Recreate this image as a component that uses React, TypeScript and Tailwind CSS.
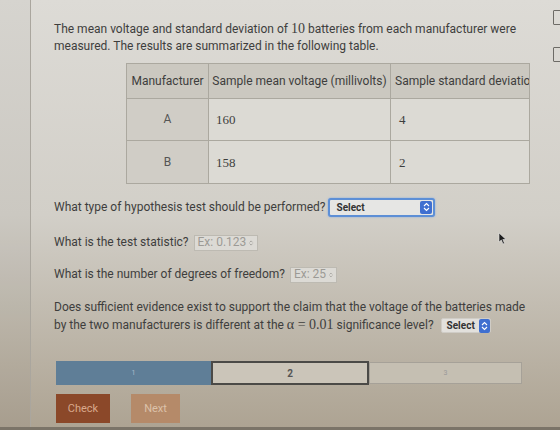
import React from 'react';

const rows = [
  { id: 'A', mean: '160', sd: '4' },
  { id: 'B', mean: '158', sd: '2' },
];

function Stepper({ className = '' }: { className?: string }) {
  return (
    <svg width="7" height="10" viewBox="0 0 7 10" className={className}>
      <path d="M1 4 L3.5 1.5 L6 4" fill="none" stroke="currentColor" strokeWidth="1.1" />
      <path d="M1 6 L3.5 8.5 L6 6" fill="none" stroke="currentColor" strokeWidth="1.1" />
    </svg>
  );
}

function NumberInput({ placeholder, width }: { placeholder: string; width: string }) {
  return (
    <span className={`inline-flex items-center justify-between gap-[3px] whitespace-nowrap h-[16px] ${width} px-[3px] ml-[5px] border border-[#bdbab2] bg-[#dcdad5] text-[#9c9a95]`}>
      <span>{placeholder}</span>
      <Stepper className="text-[#8f8d88]" />
    </span>
  );
}

export default function App() {
  return (
    <div
      className="relative w-[560px] h-[430px] overflow-hidden flex bg-linear-to-b from-[#dddbd6] via-[#d2cfc8] to-[#ada392] text-[#3e3e3d] text-[12px] leading-[17px]"
      style={{ fontFamily: 'Roboto, "Liberation Sans", sans-serif' }}
    >
      {/* left gutter */}
      <div className="w-[31px] shrink-0 border-r border-[#aaa69e] bg-black/[0.03]" />

      {/* question panel */}
      <div className="flex-1 pl-[23px] pt-[20px]">
        <p className="w-[480px]">
          The mean voltage and standard deviation of{' '}
          <span className="text-[14px]" style={{ fontFamily: '"Liberation Serif", serif' }}>10</span> batteries from each manufacturer were
          measured. The results are summarized in the following table.
        </p>

        <div className="ml-[72px] mt-[8px] w-[404px] overflow-hidden border border-[#aba89f]">
          <div className="flex h-[35px] bg-[#cbc8c0] border-b border-[#aba89f] whitespace-nowrap">
            <div className="w-[82px] shrink-0 flex items-center justify-center border-r border-[#aba89f]">Manufacturer</div>
            <div className="w-[182px] shrink-0 flex items-center justify-center border-r border-[#aba89f]">Sample mean voltage (millivolts)</div>
            <div className="flex-1 min-w-0 flex items-center pl-[4px] overflow-hidden">Sample standard deviation</div>
          </div>
          {rows.map((r, i) => (
            <div key={r.id} className={`flex h-[42px] ${i === 0 ? 'border-b border-[#aba89f]' : ''}`}>
              <div className="w-[82px] shrink-0 flex items-center justify-center bg-[#d0cdc6] border-r border-[#aba89f] text-[#555]">{r.id}</div>
              <div
                className="w-[182px] shrink-0 flex items-center pl-[7px] bg-[#dcdad4] border-r border-[#aba89f] text-[13px]"
                style={{ fontFamily: '"Liberation Serif", serif' }}
              >
                {r.mean}
              </div>
              <div
                className="flex-1 flex items-center pl-[8px] bg-[#dcdad4] text-[13px]"
                style={{ fontFamily: '"Liberation Serif", serif' }}
              >
                {r.sd}
              </div>
            </div>
          ))}
        </div>

        <div className="mt-[13px] flex items-center h-[20px]">
          <span>What type of hypothesis test should be performed?</span>
          <span className="ml-[3px] flex items-center justify-between w-[107px] h-[19px] rounded-[3px] border-2 border-[#5d8fd6] bg-[#e6e6e4] pl-[6px] pr-[1px] shadow-[0_0_2px_#7aa6e8]">
            <span className="text-[10px] font-bold text-[#333]">Select</span>
            <span className="w-[12px] h-[13px] rounded-[2px] bg-[#3f6fd0] flex items-center justify-center text-white">
              <Stepper />
            </span>
          </span>
        </div>

        <div className="mt-[17px] flex items-center h-[17px]">
          <span>What is the test statistic?</span>
          <NumberInput placeholder="Ex: 0.123" width="w-[64px]" />
        </div>

        <div className="mt-[15px] flex items-center h-[17px]">
          <span>What is the number of degrees of freedom?</span>
          <NumberInput placeholder="Ex: 25" width="w-[47px]" />
        </div>

        <p className="mt-[16px] w-[480px]">
          Does sufficient evidence exist to support the claim that the voltage of the batteries made
          <br />
          by the two manufacturers is different at the{' '}
          <span className="text-[14px]" style={{ fontFamily: '"Liberation Serif", serif' }}>
            α = 0.01
          </span>{' '}
          significance level?
          <span className="inline-flex items-center align-middle ml-[7px] h-[15px] w-[50px] rounded-[2px] bg-[#e2e0dc] border border-[#cfccc6] pl-[5px] justify-between">
            <span className="text-[10px] font-bold text-[#333]">Select</span>
            <span className="w-[11px] h-[14px] rounded-[2px] bg-[#3f6fd0] flex items-center justify-center text-white">
              <Stepper />
            </span>
          </span>
        </p>

        {/* part progress */}
        <div className="mt-[27px] flex w-[466px] h-[24px] items-stretch ml-[2px]">
          <div className="w-[155px] bg-[#5f7e97] flex items-center justify-center text-[7px] text-[#a9bccb]">1</div>
          <div className="w-[158px] border-2 border-[#4b4a47] bg-[#cbc5b9] flex items-center justify-center text-[10px] font-bold text-[#555]">2</div>
          <div className="flex-1 my-[1px] border border-[#a6a198] bg-[#c5bfb2] flex items-center justify-center text-[7px] text-[#999]">3</div>
        </div>

        <div className="mt-[9px] ml-[2px] flex gap-[21px]">
          <button className="w-[54px] h-[29px] bg-[#8b4829] text-[#d9a88c] text-[11px]">Check</button>
          <button className="w-[49px] h-[29px] bg-[#b58a69] text-[#dcc2a9] text-[11px]">Next</button>
        </div>
      </div>

      {/* right edge controls */}
      <div className="w-[7px] shrink-0 pt-[10px] flex flex-col gap-[22px]">
        <div className="w-[10px] h-[15px] border border-[#6d6b66] rounded-[1px]" />
        <div className="w-[10px] h-[15px] border border-[#6d6b66] rounded-[1px]" />
      </div>

      {/* mouse pointer */}
      <svg className="absolute left-[498px] top-[232px]" width="9" height="13" viewBox="0 0 9 13">
        <path d="M1 1 L1 10 L3.3 8 L5 12 L6.5 11.3 L4.8 7.5 L8 7.5 Z" fill="#1d1d1d" stroke="#e8e8e8" strokeWidth="0.6" />
      </svg>

      <div className="absolute left-0 right-0 bottom-0 h-[3px] bg-[#7b7468]" />
    </div>
  );
}
